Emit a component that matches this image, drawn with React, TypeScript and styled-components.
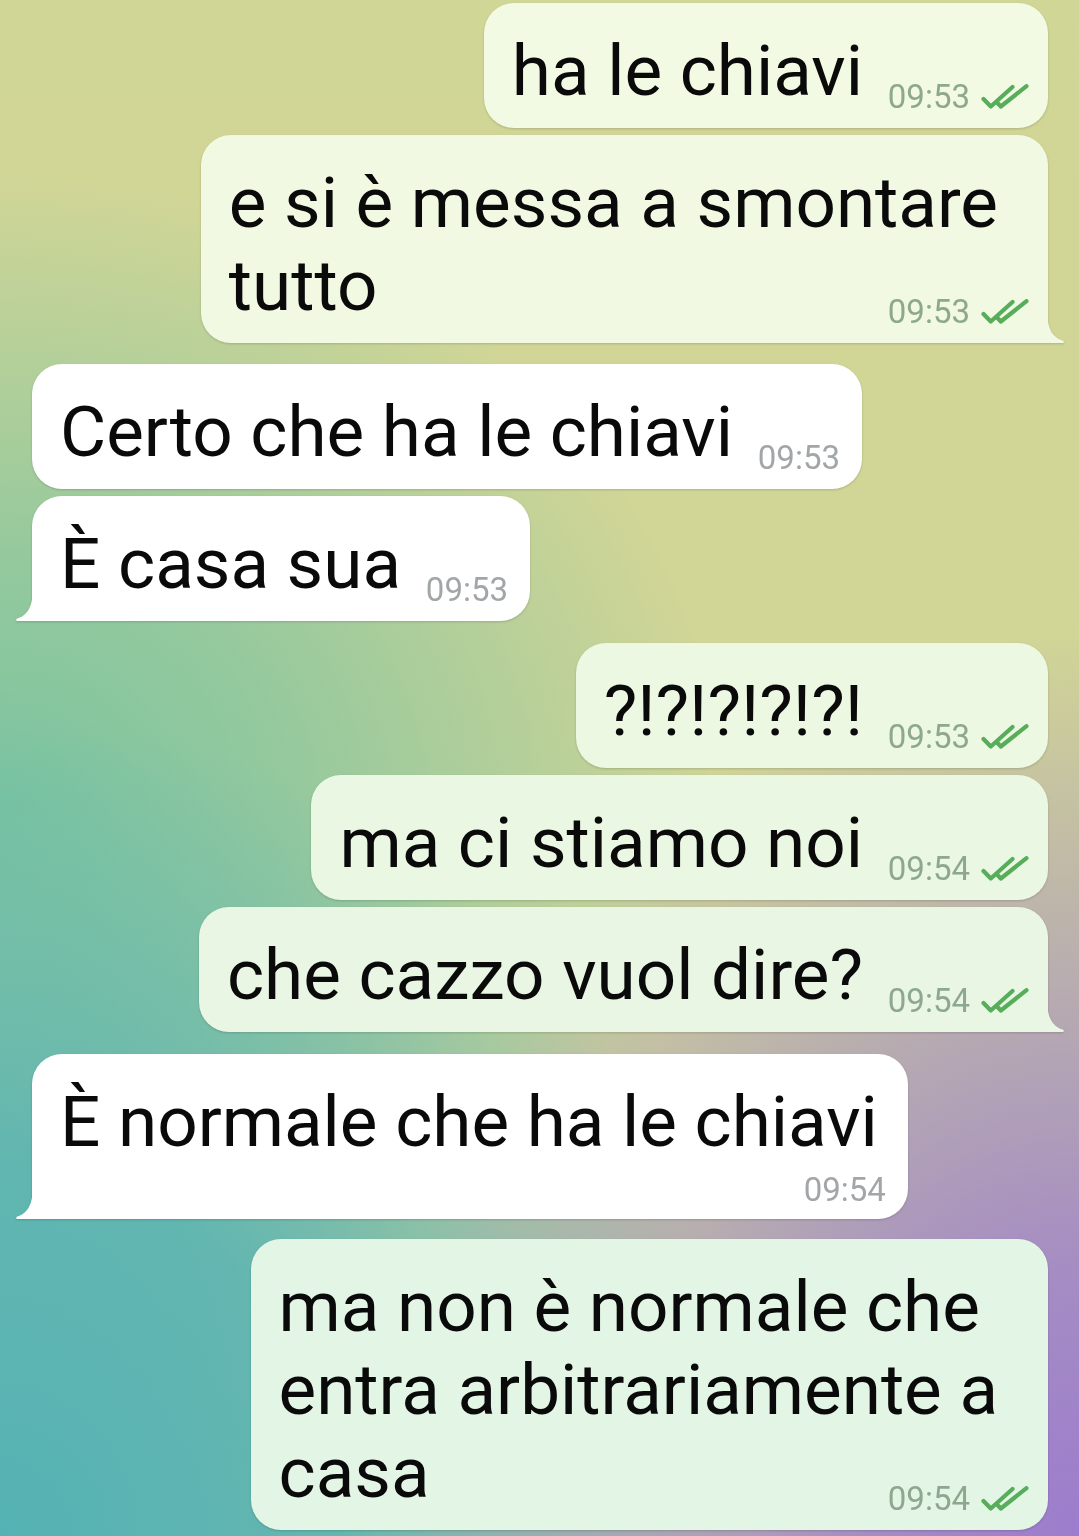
import React from 'react';
import styled, { createGlobalStyle, css } from 'styled-components';

const Global = createGlobalStyle`
  html, body { margin: 0; padding: 0; }
  body {
    font-family: Roboto, "Noto Sans", "Liberation Sans", sans-serif;
    -webkit-font-smoothing: antialiased;
  }
`;

const Screen = styled.div`
  width: 1079px;
  height: 1536px;
  box-sizing: border-box;
  padding: 3px 31px 0 32px;
  display: flex;
  flex-direction: column;
  overflow: hidden;
  background:
    radial-gradient(ellipse 700px 900px at 100% 100%, rgba(156, 124, 205, 1) 0%, rgba(156, 124, 205, 0.8) 30%, rgba(156, 124, 205, 0) 100%),
    radial-gradient(ellipse 760px 820px at 0% 100%, rgba(84, 178, 180, 1) 0%, rgba(84, 178, 180, 0.85) 45%, rgba(84, 178, 180, 0) 100%),
    radial-gradient(ellipse 720px 620px at 0% 52%, rgba(124, 196, 160, 1) 0%, rgba(124, 196, 160, 0.7) 40%, rgba(124, 196, 160, 0) 100%),
    linear-gradient(180deg, #d0d696 0%, #d1d596 40%, #c9cf9c 100%);
`;

const Row = styled.div<{ $out: boolean; $gap: number }>`
  display: flex;
  justify-content: ${(p) => (p.$out ? 'flex-end' : 'flex-start')};
  margin-top: ${(p) => p.$gap}px;
`;

const tailOut = css`
  border-bottom-right-radius: 0;
  &::after {
    content: '';
    position: absolute;
    right: -16px;
    bottom: 0;
    width: 17px;
    height: 34px;
    background: inherit;
    clip-path: path('M0 0 C0 19 5 28 15.5 31.6 C17.6 32.4 17 34 15 34 L0 34 Z');
  }
`;

const tailIn = css`
  border-bottom-left-radius: 0;
  &::after {
    content: '';
    position: absolute;
    left: -16px;
    bottom: 0;
    width: 17px;
    height: 34px;
    background: inherit;
    clip-path: path('M17 0 C17 19 12 28 1.5 31.6 C-0.6 32.4 0 34 2 34 L17 34 Z');
  }
`;

const Bubble = styled.div<{
  $out: boolean;
  $tail: boolean;
  $bg: string;
  $multi: boolean;
  $below: boolean;
}>`
  position: relative;
  box-sizing: border-box;
  background: ${(p) => p.$bg};
  border-radius: 30px;
  padding: 26px ${(p) => (p.$multi ? 50 : p.$below ? 30 : p.$out ? 20 : 22)}px
    ${(p) => (p.$below ? 10 : 16)}px 28px;
  font-size: 71px;
  line-height: 83px;
  color: #0a0a0a;
  white-space: nowrap;
  filter: drop-shadow(0 1.5px 1px rgba(0, 0, 0, 0.16));
  ${(p) => (p.$tail ? (p.$out ? tailOut : tailIn) : '')}
`;

const Text = styled.div``;

const Spacer = styled.span<{ $out: boolean }>`
  display: inline-block;
  width: ${(p) => (p.$out ? 165 : 107)}px;
  height: 1px;
`;

const Meta = styled.span<{ $out: boolean }>`
  position: absolute;
  right: ${(p) => (p.$out ? 19 : 22)}px;
  bottom: 12px;
  display: inline-flex;
  align-items: center;
  gap: 11px;
  font-size: 33px;
  line-height: 38px;
  color: ${(p) => (p.$out ? '#8ea78f' : '#a2a6a8')};
`;

const MetaRow = styled.div<{ $out: boolean }>`
  display: flex;
  justify-content: flex-end;
  align-items: center;
  gap: 11px;
  margin-top: 8px;
  margin-right: -8px;
  font-size: 33px;
  line-height: 38px;
  color: ${(p) => (p.$out ? '#8ea78f' : '#a2a6a8')};
`;

const Checks = () => (
  <svg width="48" height="26" viewBox="0 0 48 26" fill="none">
    <path d="M2.5 15 L9.8 22.5 L31.5 3" stroke="#58ad5b" strokeWidth="4.2" strokeLinecap="round" strokeLinejoin="round" />
    <path d="M16.5 19 L19.8 22.5 L45.5 2.2" stroke="#58ad5b" strokeWidth="4.2" strokeLinecap="round" strokeLinejoin="round" />
  </svg>
);

type Msg = {
  out: boolean;
  lines: string[];
  time: string;
  gap: number;
  tail?: boolean;
  below?: boolean;
  bg?: string;
};

const messages: Msg[] = [
  { out: true, lines: ['ha le chiavi'], time: '09:53', gap: 0, bg: '#f3fae3' },
  { out: true, lines: ['e si è messa a smontare', 'tutto'], time: '09:53', gap: 7, tail: true, bg: '#f1f9e2' },
  { out: false, lines: ['Certo che ha le chiavi'], time: '09:53', gap: 21 },
  { out: false, lines: ['È casa sua'], time: '09:53', gap: 7, tail: true },
  { out: true, lines: ['?!?!?!?!?!'], time: '09:53', gap: 22, bg: '#ecf8e2' },
  { out: true, lines: ['ma ci stiamo noi'], time: '09:54', gap: 7, bg: '#eaf7e2' },
  { out: true, lines: ['che cazzo vuol dire?'], time: '09:54', gap: 7, tail: true, bg: '#e8f6e3' },
  { out: false, lines: ['È normale che ha le chiavi'], time: '09:54', gap: 22, tail: true, below: true },
  { out: true, lines: ['ma non è normale che', 'entra arbitrariamente a', 'casa'], time: '09:54', gap: 20, bg: '#e3f5e5' },
];

export default function App() {
  return (
    <>
      <Global />
      <Screen>
        {messages.map((m, i) => (
          <Row key={i} $out={m.out} $gap={m.gap}>
            <Bubble
              $out={m.out}
              $tail={!!m.tail}
              $bg={m.out ? m.bg || '#eef8e2' : '#ffffff'}
              $multi={m.lines.length > 1}
              $below={!!m.below}
            >
              <Text>
                {m.lines.map((l, j) => (
                  <React.Fragment key={j}>
                    {j > 0 && <br />}
                    {l}
                  </React.Fragment>
                ))}
                {!m.below && <Spacer $out={m.out} />}
              </Text>
              {m.below ? (
                <MetaRow $out={m.out}>
                  <span>{m.time}</span>
                  {m.out && <Checks />}
                </MetaRow>
              ) : (
                <Meta $out={m.out}>
                  <span>{m.time}</span>
                  {m.out && <Checks />}
                </Meta>
              )}
            </Bubble>
          </Row>
        ))}
      </Screen>
    </>
  );
}
